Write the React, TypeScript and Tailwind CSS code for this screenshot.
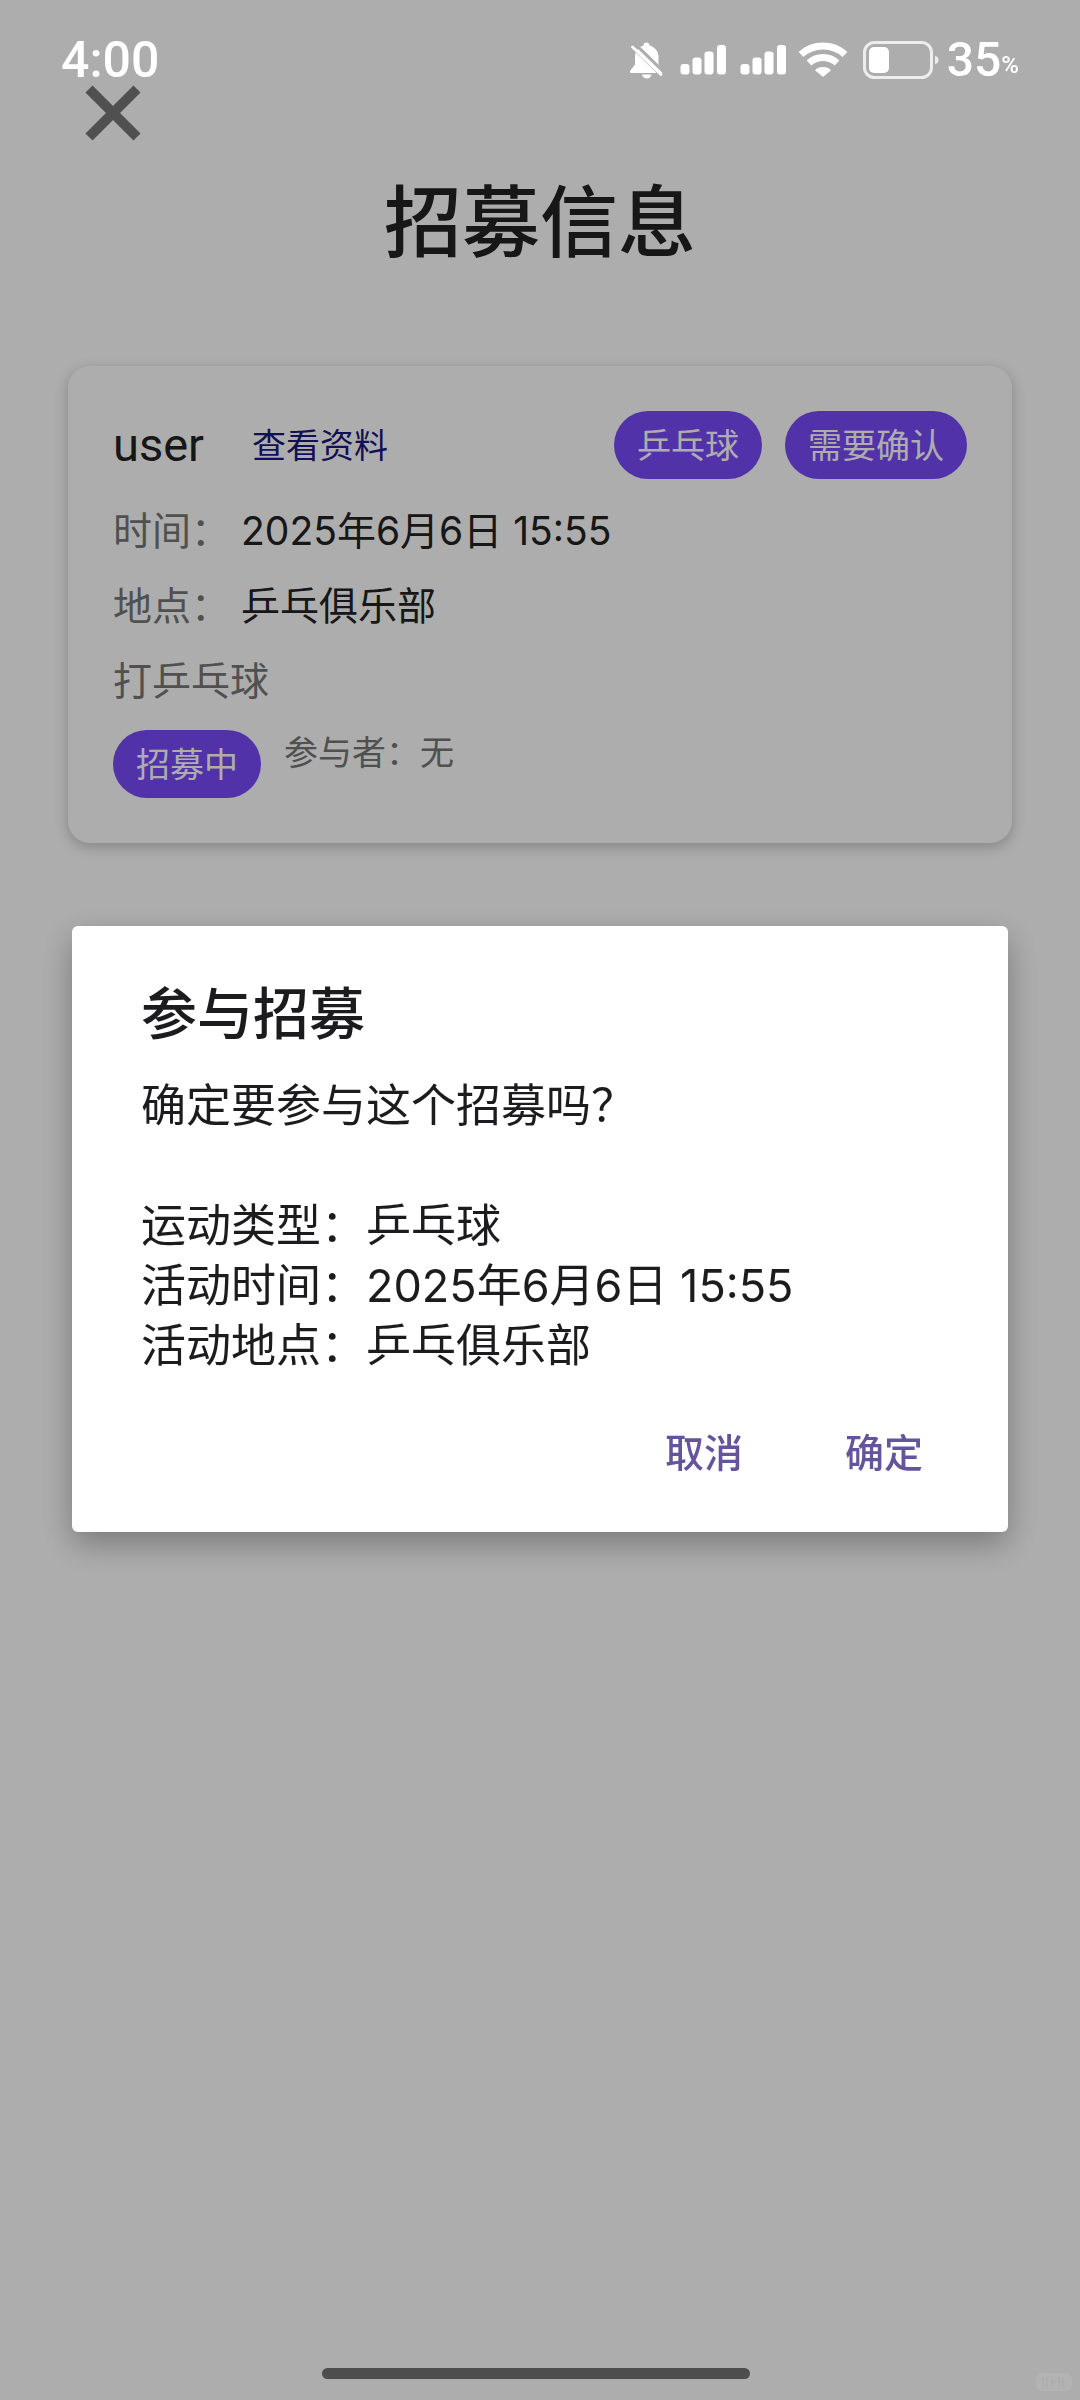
import React, { useState } from "react";

function MutedBell() {
    return (
        <svg viewBox="0 0 33 37" className="w-[33px] h-[37px]" fill="white" aria-label="静音">
            <path d="M16.500 0.500c1.700 0 3 1.200 3 2.900 5 1.300 9 5.600 9 11.100v7.500l3.500 6v3H1.500c-1.700 0-1.800-1.700-.9-2.700L5 22.500v-8C5 9 8.500 4.800 13.500 3.400c0-1.700 1.300-2.900 3-2.900z" />
            <path d="M12 32.500h9.500c-.6 2.500-2.400 4-4.700 4s-4.200-1.500-4.800-4z" />
            <path d="M-1 2L34 36" stroke="#adadad" strokeWidth="3" />
            <path d="M4 1L36 32" stroke="#adadad" strokeWidth="3" />
            <path d="M2.500 5L31 32.500" stroke="white" strokeWidth="2.800" strokeLinecap="round" />
        </svg>
    );
}

function SignalBars() {
    return (
        <svg viewBox="0 0 46 30" className="w-[46px] h-[30px]" fill="white" aria-label="信号">
            <rect x="0.500" y="19" width="9" height="10.500" rx="3" />
            <rect x="12.500" y="12.500" width="9" height="17" rx="3" />
            <rect x="24.500" y="6.500" width="9" height="23" rx="3" />
            <rect x="37" y="0" width="9" height="29.500" rx="3" />
        </svg>
    );
}

function Wifi() {
    return (
        <svg viewBox="0 0 50 36" className="w-[50px] h-[36px]" aria-label="Wi-Fi">
            <g fill="none" stroke="white" strokeWidth="7">
                <path d="M3 12.500C9 7 16.500 4 25 4s16 3 22 8.500" />
                <path d="M11 21c4-3.600 8.700-5.500 14-5.500s10 1.900 14 5.500" />
            </g>
            <path d="M25 25c3.300 0 6 1.200 8 3.200L25 35l-8-6.800c2-2 4.700-3.200 8-3.200z" fill="white" />
        </svg>
    );
}

function Battery() {
    return (
        <svg viewBox="0 0 76 38" className="w-[76px] h-[38px]" aria-label="电量">
            <rect x="1.500" y="1.500" width="67" height="35" rx="10" fill="none" stroke="#ededed" strokeWidth="3" />
            <rect x="6" y="6" width="20" height="26" rx="5" fill="white" />
            <path d="M72 15c2.500.6 3.500 2 3.500 4s-1 3.400-3.500 4z" fill="#ededed" />
        </svg>
    );
}

function StatusBar() {
    return (
        <div className="relative z-20 flex items-center justify-between h-[120px] px-[61px] font-['Roboto',sans-serif] font-medium text-white">
            <span className="text-[50px] leading-[50px]">4:00</span>
            <div className="flex items-center">
                <MutedBell />
                <div className="flex gap-[14px] ml-[17px]">
                    <SignalBars />
                    <SignalBars />
                </div>
                <div className="ml-[12px]">
                    <Wifi />
                </div>
                <div className="ml-[15px]">
                    <Battery />
                </div>
                <span className="ml-[8px] text-[48px] leading-[48px]">35</span>
                <span className="pt-[10px] text-[24px] leading-[24px]">%</span>
            </div>
        </div>
    );
}

function Chip({ children }: { children: React.ReactNode }) {
    return (
        <span className="flex items-center h-[68px] px-[23px] rounded-full bg-[#784af9] text-white text-[34px] leading-[45px] whitespace-nowrap">
            {children}
        </span>
    );
}

function InfoRow({ label, value }: { label: string; value: string }) {
    return (
        <div className="flex gap-[11px] text-[39px] leading-[52px]">
            <span className="text-[#767676]">{label}</span>
            <span>{value}</span>
        </div>
    );
}

function RecruitCard() {
    return (
        <section className="flex flex-col gap-[23px] mx-[68px] p-[45px] rounded-[22px] bg-white shadow-[0_4px_14px_rgba(0,0,0,0.24)]">
            <div className="flex items-center justify-between mb-[3px]">
                <div className="flex items-center gap-[48px]">
                    <span className="font-['Roboto',sans-serif] text-[47px] leading-[60px]">user</span>
                    <a href="#profile" className="text-[34px] leading-[45px] text-[#1a1880]">
                        查看资料
                    </a>
                </div>
                <div className="flex gap-[23px]">
                    <Chip>乒乓球</Chip>
                    <Chip>需要确认</Chip>
                </div>
            </div>
            <InfoRow label="时间：" value="2025年6月6日 15:55" />
            <InfoRow label="地点：" value="乒乓俱乐部" />
            <p className="text-[39px] leading-[52px] text-[#767676]">打乒乓球</p>
            <div className="flex items-start gap-[23px]">
                <Chip>招募中</Chip>
                <span className="text-[34px] leading-[45px] text-[#767676]">参与者：无</span>
            </div>
        </section>
    );
}

const message = `确定要参与这个招募吗？

运动类型：乒乓球
活动时间：2025年6月6日 15:55
活动地点：乒乓俱乐部`;

function JoinDialog({ onClose }: { onClose: () => void }) {
    return (
        <div className="fixed inset-0 z-10 flex items-center justify-center px-[72px] pt-[58px] bg-black/32">
            <div
                role="dialog"
                aria-labelledby="join-title"
                className="w-full pt-[50px] pb-[12px] rounded-[6px] bg-white text-[#1c1b1d] shadow-[0_12px_32px_rgba(0,0,0,0.3)]"
            >
                <h2 id="join-title" className="px-[69px] text-[56px] leading-[76px] font-medium">
                    参与招募
                </h2>
                <p className="mt-[24px] px-[69px] text-[45px] leading-[60px] whitespace-pre-line">{message}</p>
                <div className="flex justify-end mt-[10px] pr-[34px] text-[39px] text-[#65549b] font-medium">
                    <button className="w-[180px] h-[134px]" onClick={onClose}>
                        取消
                    </button>
                    <button className="w-[180px] h-[134px]" onClick={onClose}>
                        确定
                    </button>
                </div>
            </div>
        </div>
    );
}

function BottomBar() {
    return (
        <div className="relative z-20 grid grid-cols-[1fr_428px_1fr] mt-auto pr-[8px] pb-[9px]">
            <div className="col-start-2 h-[11px] rounded-full bg-[#4d4d4d]" />
            <svg viewBox="0 0 36 18" className="w-[36px] h-[18px] mt-[5px] justify-self-end" aria-hidden="true">
                <rect width="36" height="18" rx="6" fill="#b3b3b3" />
                <path d="M7 4v10M11 4v10M16 4v10M14 9h6M23 4v10M21 9h8M27 4v10" stroke="#a9a9a9" strokeWidth="1" />
            </svg>
        </div>
    );
}

export default function App() {
    const [showDialog, setShowDialog] = useState(true);

    return (
        <div className="flex flex-col min-h-screen bg-white text-[#222222] font-['Inter','Noto_Sans_CJK_SC',sans-serif]">
            <StatusBar />
            <header className="flex flex-col mt-[-35px]">
                <button className="self-start ml-[85px]" aria-label="关闭">
                    <svg viewBox="0 0 56 56" className="w-[56px] h-[56px]" stroke="#777777" strokeWidth="10">
                        <path d="M4 4L52 52M52 4L4 52" />
                    </svg>
                </button>
                <h1 className="mt-[30px] mb-[91px] text-center text-[78px] leading-[104px] font-medium">招募信息</h1>
            </header>
            <RecruitCard />
            {showDialog && <JoinDialog onClose={() => setShowDialog(false)} />}
            <BottomBar />
        </div>
    );
}
